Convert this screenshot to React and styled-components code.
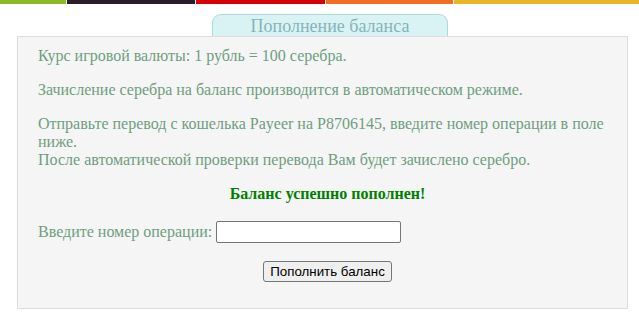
import React from 'react';
import styled, { createGlobalStyle } from 'styled-components';

const GlobalStyle = createGlobalStyle`
  body {
    margin: 0;
    background: #fff;
    font-family: 'Liberation Serif', 'Times New Roman', serif;
  }
`;

const TopBar = styled.div`
  display: flex;
  gap: 1px;
  height: 4px;
`;

const BarPart = styled.div`
  width: ${(props) => props.w}px;
  flex: ${(props) => (props.grow ? 1 : 'none')};
  background: ${(props) => props.color};
`;

const Page = styled.div`
  padding-top: 10px;
`;

const Tab = styled.div`
  margin-left: 212px;
  width: 234px;
  height: 21px;
  border: 1px solid #a9dcd8;
  border-bottom: none;
  border-radius: 9px 9px 0 0;
  background: #d9f3f4;
  color: #86b4b8;
  font-size: 18px;
  line-height: 22px;
  text-align: center;
`;

const Panel = styled.div`
  margin: 0 11px 0 17px;
  padding: 10px 10px 26px 20px;
  border: 1px solid #dcdcdc;
  background: #f5f5f5;
  color: #6e9e80;
  font-size: 16px;

  p {
    margin: 16px 0;
  }
  p:first-child {
    margin-top: 0;
  }
`;

const Success = styled.p`
  text-align: center;
  font-weight: bold;
  color: #008000;
`;

const FormRow = styled.div`
  display: flex;
  align-items: center;
  gap: 4px;
  margin-top: 18px;
`;

const Input = styled.input`
  width: 179px;
  height: 18px;
  padding: 1px 2px;
  border: 1px solid #767676;
  border-radius: 2px;
  background: #fff;
`;

const Submit = styled.button`
  display: block;
  margin: 18px auto 0 auto;
  padding: 1px 6px;
  height: 21px;
  font-family: 'Liberation Sans', Arial, sans-serif;
  font-size: 13.33px;
  color: #000;
  background: #efefef;
  border: 1px solid #767676;
  border-radius: 3px;
`;

function App() {
  return (
    <>
      <GlobalStyle />
      <TopBar>
        <BarPart w={66} color="#8bbb22" />
        <BarPart w={128} color="#2b1d27" />
        <BarPart w={129} color="#d70006" />
        <BarPart w={127} color="#f26c21" />
        <BarPart grow color="#e8b526" />
      </TopBar>
      <Page>
        <Tab>Пополнение баланса</Tab>
        <Panel>
          <p>Курс игровой валюты: 1 рубль = 100 серебра.</p>
          <p>Зачисление серебра на баланс производится в автоматическом режиме.</p>
          <p>
            Отправьте перевод с кошелька Payeer на P8706145, введите номер операции в поле ниже.
            <br />
            После автоматической проверки перевода Вам будет зачислено серебро.
          </p>
          <Success>Баланс успешно пополнен!</Success>
          <FormRow>
            <span>Введите номер операции:</span>
            <Input type="text" />
          </FormRow>
          <Submit>Пополнить баланс</Submit>
        </Panel>
      </Page>
    </>
  );
}

export default App;
